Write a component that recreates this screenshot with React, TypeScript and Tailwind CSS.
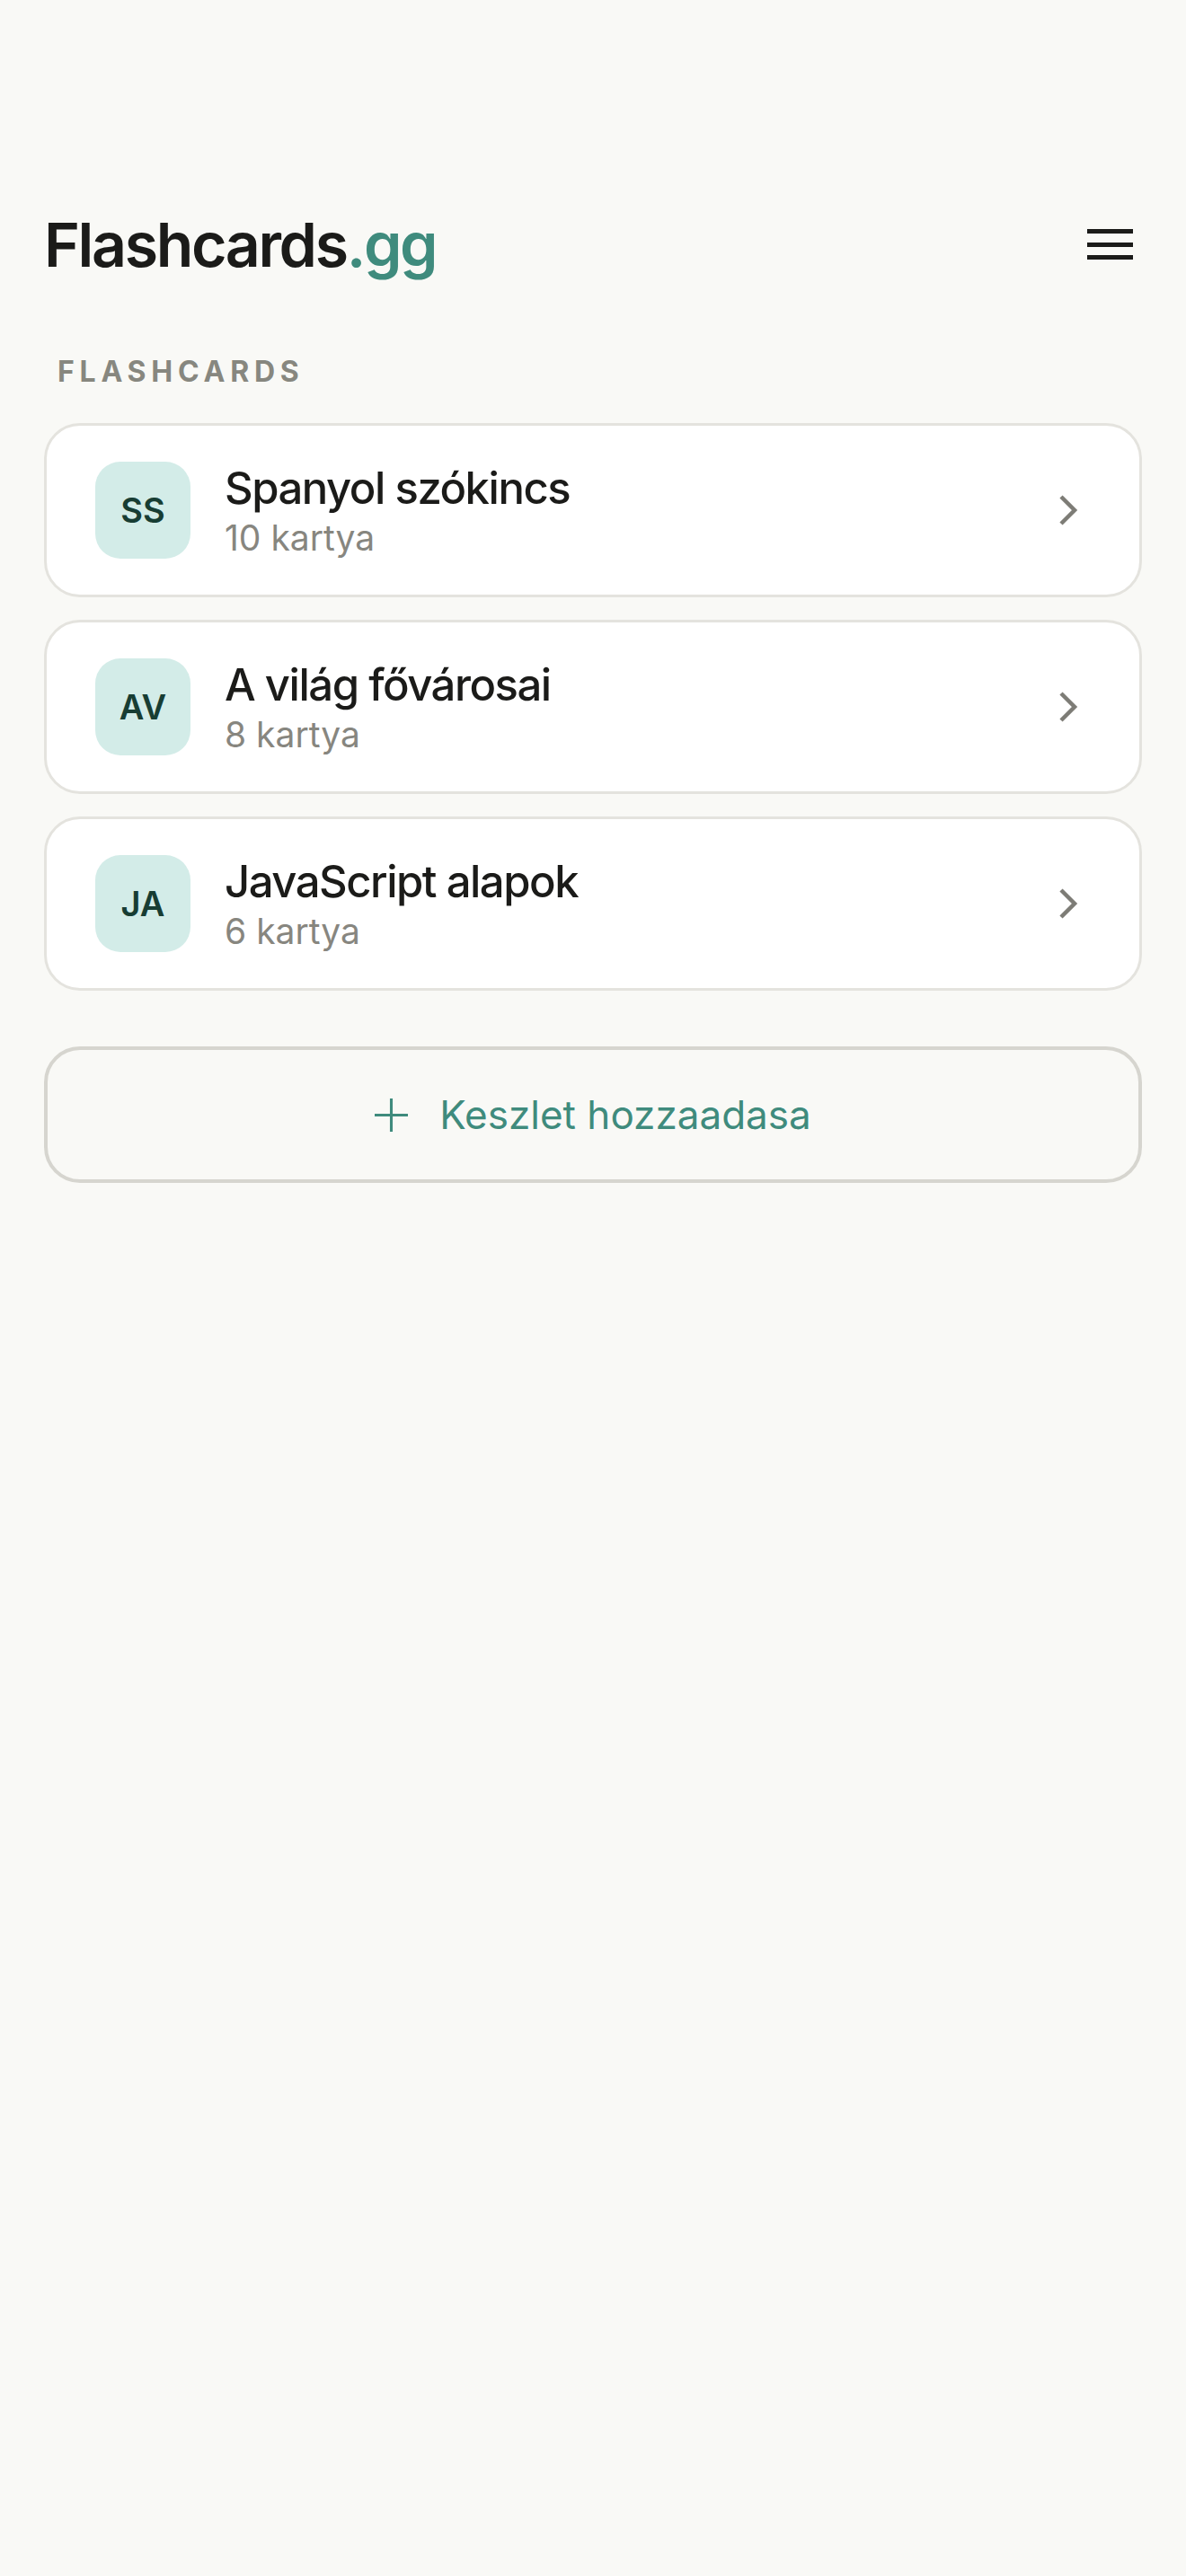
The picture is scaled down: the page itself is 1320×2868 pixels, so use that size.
import React from "react";

const decks = [
  { initials: "SS", title: "Spanyol szókincs", count: "10 kartya" },
  { initials: "AV", title: "A világ fővárosai", count: "8 kartya" },
  { initials: "JA", title: "JavaScript alapok", count: "6 kartya" },
];

export default function App() {
  return (
    <div className="min-h-[2868px] w-full bg-[#f9f9f6] px-[49px] font-['Inter',sans-serif]">
      <header className="flex items-center justify-between pt-[238px]">
        <h1 className="text-[68px] font-semibold leading-none tracking-[-0.035em] text-[#1b1b19]">
          Flashcards<span className="text-[#3f8b7d]">.gg</span>
        </h1>
        <button className="mr-[10px] flex h-[34px] w-[51px] flex-col justify-between">
          <span className="block h-[5px] w-full bg-[#1b1b19]" />
          <span className="block h-[5px] w-full bg-[#1b1b19]" />
          <span className="block h-[5px] w-full bg-[#1b1b19]" />
        </button>
      </header>

      <div className="mt-[92px] pl-[15px] text-[32px] font-bold leading-none tracking-[0.18em] text-[#87877f]">
        FLASHCARDS
      </div>

      <div className="mt-[41px] flex flex-col gap-[25px]">
        {decks.map((d) => (
          <div
            key={d.initials}
            className="flex h-[194px] items-center rounded-[40px] border-[3px] border-[#e4e3de] bg-white pl-[54px] pr-[66px]"
          >
            <div className="flex h-[108px] w-[106px] shrink-0 items-center justify-center rounded-[28px] bg-[#d3ece8] text-[38px] font-semibold text-[#173d33]">
              {d.initials}
            </div>
            <div className="ml-[38px] flex flex-1 flex-col">
              <div className="text-[49px] font-medium leading-[60px] tracking-[-0.03em] text-[#1b1b19]">
                {d.title}
              </div>
              <div className="mt-[2px] text-[39px] leading-[46px] text-[#87867f]">{d.count}</div>
            </div>
            <svg width="24" height="36" viewBox="0 0 24 36" fill="none" stroke="#7d7c76" strokeWidth="4.5" strokeLinecap="butt" strokeLinejoin="miter">
              <path d="M3 3l15 15L3 33" />
            </svg>
          </div>
        ))}
      </div>

      <button className="mt-[62px] flex h-[152px] w-full items-center justify-center gap-[35px] rounded-[40px] border-[4px] border-[#d6d5cf] text-[44px] font-normal text-[#3f8b7d]">
        <svg width="37" height="37" viewBox="0 0 24 24" fill="none" stroke="#3f8b7d" strokeWidth="2">
          <path d="M12 0v24M0 12h24" />
        </svg>
        <span>Keszlet hozzaadasa</span>
      </button>
    </div>
  );
}
